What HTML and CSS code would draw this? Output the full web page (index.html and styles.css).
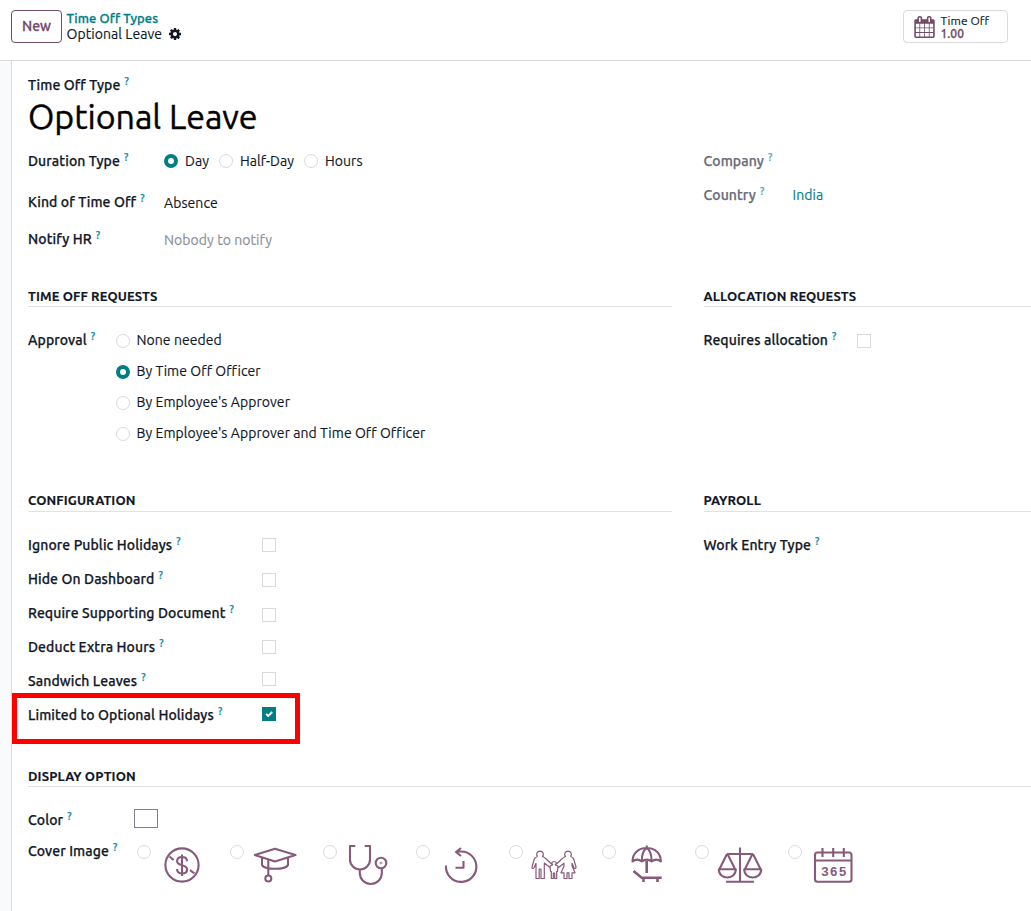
FILE: index.html
```html
<!DOCTYPE html>
<html lang="en">
<head>
<meta charset="utf-8">
<title>Optional Leave</title>
<link rel="stylesheet" href="styles.css">
</head>
<body>
<header class="topbar">
  <button class="btn-new">New</button>
  <nav class="crumbs">
    <a class="crumb-link">Time Off Types</a>
    <div class="crumb-current"><span>Optional Leave</span>
      <svg class="gear" viewBox="128 128 1536 1536"><path d="M1152 896q0-106-75-181t-181-75-181 75-75 181 75 181 181 75 181-75 75-181zm512-109v222q0 12-8 23t-20 13l-185 28q-19 54-39 91 35 50 107 138 10 12 10 25t-9 23q-27 37-99 108t-94 71q-12 0-26-9l-138-108q-44 23-91 38-16 136-29 186-7 28-36 28h-222q-14 0-24.5-8.5t-11.5-21.5l-28-184q-49-16-90-37l-141 107q-10 9-25 9-14 0-25-11-126-114-165-168-7-10-7-23 0-12 8-23 15-21 51-66.500t54-70.500q-27-50-41-99l-183-27q-13-2-21-12.500t-8-23.500v-222q0-12 8-23t19-13l186-28q14-46 39-92-40-57-107-138-10-12-10-24 0-10 9-23 26-36 98.500-107.500t94.500-71.500q13 0 26 10l138 107q44-23 91-38 16-136 29-186 7-28 36-28h222q14 0 24.500 8.500t11.500 21.500l28 184q49 16 90 37l142-107q9-9 24-9 13 0 25 10 129 119 165 170 7 8 7 22 0 12-8 23-15 21-51 66.500t-54 70.500q26 50 41 98l183 28q13 2 21 12.500t8 23.500z"/></svg>
    </div>
  </nav>
  <button class="stat">
    <svg class="cal" viewBox="64 0 1664 1792"><path d="M192 1664h288v-288h-288v288zm352 0h320v-288h-320v288zm-352-352h288v-320h-288v320zm352 0h320v-320h-320v320zm-352-384h288v-288h-288v288zm736 736h320v-288h-320v288zm-384-736h320v-288h-320v288zm768 736h288v-288h-288v288zm-384-352h320v-320h-320v320zm-352-864v-288q0-13-9.500-22.500t-22.500-9.500h-64q-13 0-22.500 9.500t-9.500 22.500v288q0 13 9.500 22.500t22.500 9.500h64q13 0 22.500-9.500t9.500-22.500zm736 864h288v-320h-288v320zm-384-384h320v-288h-320v288zm384 0h288v-288h-288v288zm32-480v-288q0-13-9.500-22.500t-22.500-9.500h-64q-13 0-22.500 9.500t-9.500 22.500v288q0 13 9.500 22.500t22.500 9.500h64q13 0 22.500-9.500t9.500-22.500zm384-64v1280q0 52-38 90t-90 38h-1408q-52 0-90-38t-38-90v-1280q0-52 38-90t90-38h128v-96q0-66 47-113t113-47h64q66 0 113 47t47 113v96h384v-96q0-66 47-113t113-47h64q66 0 113 47t47 113v96h128q52 0 90 38t38 90z"/></svg>
    <span class="stat-text"><span class="stat-name">Time Off</span><span class="stat-value">1.00</span></span>
  </button>
</header>
<main class="sheet">
  <div class="label title-label"><span>Time Off Type</span><sup>?</sup></div>
  <h1 class="title">Optional Leave</h1>

  <div class="columns general">
    <div class="col">
      <div class="row row-duration"><div class="label w136"><span>Duration Type</span><sup>?</sup></div>
        <div class="inline-radios">
          <label class="opt day"><i class="radio on"></i><span>Day</span></label>
          <label class="opt half"><i class="radio"></i><span>Half-Day</span></label>
          <label class="opt hours"><i class="radio"></i><span>Hours</span></label>
        </div>
      </div>
      <div class="row row-kind"><div class="label w136"><span>Kind of Time Off</span><sup>?</sup></div><span class="value low">Absence</span></div>
      <div class="row"><div class="label w136"><span>Notify HR</span><sup>?</sup></div><span class="value low placeholder">Nobody to notify</span></div>
    </div>
    <div class="col muted">
      <div class="row h34"><div class="label"><span>Company</span><sup>?</sup></div></div>
      <div class="row"><div class="label w89"><span>Country</span><sup>?</sup></div><a class="value link">India</a></div>
    </div>
  </div>

  <div class="columns requests">
    <section class="col">
      <h2>TIME OFF REQUESTS</h2>
      <div class="row"><div class="label w88"><span>Approval</span><sup>?</sup></div>
        <div class="stack-radios">
          <label class="opt"><i class="radio"></i><span>None needed</span></label>
          <label class="opt"><i class="radio on"></i><span>By Time Off Officer</span></label>
          <label class="opt"><i class="radio"></i><span>By Employee's Approver</span></label>
          <label class="opt"><i class="radio"></i><span>By Employee's Approver and Time Off Officer</span></label>
        </div>
      </div>
    </section>
    <section class="col">
      <h2>ALLOCATION REQUESTS</h2>
      <div class="row"><div class="label w153"><span>Requires allocation</span><sup>?</sup></div><i class="check c4"></i></div>
    </section>
  </div>

  <div class="columns config">
    <section class="col">
      <h2>CONFIGURATION</h2>
      <div class="row h34"><div class="label w234"><span>Ignore Public Holidays</span><sup>?</sup></div><i class="check c3"></i></div>
      <div class="row h34"><div class="label w234"><span>Hide On Dashboard</span><sup>?</sup></div><i class="check c4"></i></div>
      <div class="row h34"><div class="label w234"><span>Require Supporting Document</span><sup>?</sup></div><i class="check c5"></i></div>
      <div class="row h34"><div class="label w234"><span>Deduct Extra Hours</span><sup>?</sup></div><i class="check c3"></i></div>
      <div class="row h34"><div class="label w234"><span>Sandwich Leaves</span><sup>?</sup></div><i class="check c1"></i></div>
      <div class="row limited"><div class="label w234"><span>Limited to Optional Holidays</span><sup>?</sup></div><i class="check c2 checked"><svg viewBox="0 0 14 14"><path d="M4 6.800 6.200 9 10.200 5"/></svg></i><div class="highlight"></div></div>
    </section>
    <section class="col">
      <h2>PAYROLL</h2>
      <div class="row"><div class="label"><span>Work Entry Type</span><sup>?</sup></div></div>
    </section>
  </div>

  <section class="display">
    <h2>DISPLAY OPTION</h2>
    <div class="row color-row"><div class="label w106"><span>Color</span><sup>?</sup></div><i class="swatch"></i></div>
    <div class="row"><div class="label w109"><span>Cover Image</span><sup>?</sup></div>
      <div class="covers">
        <label class="cover"><i class="radio"></i><svg viewBox="159 842 48 46"><circle cx="182" cy="865" r="16.600"/><path d="M169.500 856.500l4.200 3.500M190 870.200l4.500 3.300M182 854.500v21.500M187 861.300c0-2.700-2-4.300-5-4.300s-4.900 1.600-4.900 4.200c0 5.300 10 2.600 10 8 0 2.700-2.100 4.300-5.100 4.300s-5-1.700-5-4.400"/></svg></label>
        <label class="cover"><i class="radio"></i><svg viewBox="252 842 48 46"><path d="M254.800 855 275 848.700l20.500 6.300L275 861.400zM262 857.500v7.500c2 5 24 5 26 0v-7.500M268.300 859.500v16"/><circle cx="268.300" cy="878.500" r="3"/></svg></label>
        <label class="cover"><i class="radio"></i><svg viewBox="345 842 48 46"><path d="M355.300 846h-5.300v13.500a10 10 0 0 0 20 0v-13.500h-5.300M359.800 869.700v3.300a11 11 0 0 0 22 0v-4.500"/><circle cx="381" cy="863" r="5.300"/><circle cx="381" cy="863" r=".3"/></svg></label>
        <label class="cover"><i class="radio"></i><svg viewBox="438 842 48 46"><path d="M446 865.500a15.200 15.200 0 1 0 15.200-14h-4.500M461 848l-5 4 5 4M463.500 861v6.700h-8"/></svg></label>
        <label class="cover"><i class="radio"></i><svg class="thin" viewBox="531 842 48 46"><path d="M537.500 856.500c-1.800-2-.5-5.300 2.500-5.300s4.300 3.300 2.500 5.300c1.500.8 2.500 1.200 3.700 2.500l4.800 4.500 2.200 1M537.500 856.500c-1.500.5-2.700 1-3.200 2.500l-2.300 8c-.3 1.500 1.300 2 2 .8l2-4.500v15.200h3.200v-9.500h1.800v9.500h3.300v-15.500l5.700 4.500"/><path d="M570.500 856.500c1.800-2 .5-5.300-2.500-5.300s-4.300 3.300-2.500 5.300c-1.500.8-2.500 1.200-3.700 2.500l-4.800 4.500-2.200 1M570.500 856.500c1.500.5 2.700 1 3.200 2.500l2.300 8c.3 1.500-1.300 2-2 .8l-2-4.500v2.500l3 7h-3v5.700h-3v-5.700h-2v5.700h-3v-5.700h-3l3-6.500v-3l-5.700 4.500M552.300 865.200c-1.200-1.500-.5-3.700 1.700-3.700s2.900 2.200 1.700 3.700l2.300.8-.5 5.500h-.8v7h-2v-5.500h-1.400v5.500h-2v-7h-.8l-.5-5.500z"/></svg></label>
        <label class="cover"><i class="radio"></i><svg viewBox="624 842 48 46"><path d="M646.700 845.500v2.500M632.500 861.500c0-8 5.700-13.500 14.200-13.500s14.200 5.500 14.200 13.500c-3-2.300-6.500-2.300-9.300 0-3-2.300-6.800-2.300-9.800 0-2.800-2.300-6.300-2.300-9.300 0zM641.800 861c0-6 2-11 4.900-13 2.900 2 4.900 7 4.900 13"/><path class="thick" d="M646.700 861v12M633.500 871l8.200 6.700h20M643.500 878v4M657.500 878v4"/></svg></label>
        <label class="cover"><i class="radio"></i><svg viewBox="717 842 48 46"><path d="M740 847.500v34M726 881.700h28M727 854h26M727 854l-7.500 15M727.500 854l7.500 15M752.500 854l-7.500 15M753 854l7.500 15M718.800 869.300h17c0 11-17 11-17 0zM744.200 869.300h17c0 11-17 11-17 0z"/></svg></label>
        <label class="cover"><i class="radio"></i><svg viewBox="810 842 48 46"><rect x="815" y="852.500" width="36.500" height="29.300" rx="2.500"/><path d="M815 860.500h36.500M822.500 848v9M833.200 848v9M843.800 848v9"/><text x="821" y="875.500" textLength="25.500" lengthAdjust="spacing">365</text></svg></label>
      </div>
    </div>
  </section>
</main>
</body>
</html>
```
FILE: styles.css
```css
* { box-sizing: border-box; }
body {
  margin: 0;
  height: 911px;
  overflow: hidden;
  display: flex;
  flex-direction: column;
  background: #f9fafb;
  color: #111827;
  font: 14px/20px Ubuntu, "Noto Sans", sans-serif;
  letter-spacing: .06px;
  -webkit-text-stroke: .15px;
}
button { font: inherit; letter-spacing: inherit; background: #fff; cursor: pointer; }
h1, h2 { margin: 0; }
span, a { white-space: nowrap; }

.topbar {
  flex: none;
  display: flex;
  align-items: flex-start;
  height: 61px;
  padding: 10px 23px 0 11px;
  background: #fff;
  border-bottom: 1px solid #d8dadd;
}
.btn-new {
  width: 51px;
  height: 33px;
  padding: 0 0 2px;
  border: 1px solid #714b67;
  border-radius: 4px;
  color: #714b67;
  font-weight: 500;
  -webkit-text-stroke: .3px;
}
.crumbs { flex: 1; padding-left: 4.500px; line-height: 16px; }
.crumb-link { display: block; color: #017e84; font-size: 13px; font-weight: 500; letter-spacing: .08px; -webkit-text-stroke: .3px; }
.crumb-current { display: flex; align-items: center; gap: 7px; }
.gear { width: 12px; height: 12px; fill: #111827; }
.stat {
  display: flex;
  align-items: center;
  width: 105px;
  height: 33px;
  padding: 0 0 0 10px;
  border: 1px solid #d8dadd;
  border-radius: 4px;
  text-align: left;
  color: #111827;
}
.cal { width: 21px; height: 22px; margin-right: 5.500px; fill: #714b67; }
.stat-text { display: flex; flex-direction: column; font-size: 12px; line-height: 13px; }
.stat-value { color: #714b67; font-weight: 500; -webkit-text-stroke: .3px; }

.sheet {
  flex: 1;
  margin-left: 11px;
  padding: 14px 0 0 16px;
  border-left: 1px solid #d8dadd;
  background: #fff;
}
.label { display: flex; font-weight: 500; letter-spacing: .1px; -webkit-text-stroke: .25px; }
.label sup {
  margin: -4px 0 0 4px;
  font-size: 10.500px;
  line-height: 20px;
  color: #0b8cb0;
  -webkit-text-stroke: .25px;
}
.title { height: 56px; font-size: 34px; line-height: 42px; font-weight: 400; letter-spacing: -.05px; color: #000; -webkit-text-stroke: .4px; }
.columns { display: grid; grid-template-columns: 644px 1fr; column-gap: 31.500px; }
.row { display: flex; align-items: flex-start; }
.general { height: 135px; }
.row-duration { height: 41px; }
.row-kind { height: 37px; }
.h34 { height: 34px; }
.w136 { width: 136px; }
.w89 { width: 89px; }
.w88 { width: 88px; }
.w153 { width: 153px; }
.w234 { width: 234px; }
.w106 { width: 106px; }
.w109 { width: 109px; }
.low { padding-top: 1px; }
.placeholder { color: #8a8f99; }
.link { color: #017e84; }
.muted .label { color: #666b76; }
.muted sup { opacity: .75; }

.radio {
  flex: none;
  width: 14px;
  height: 14px;
  border: 1px solid #d8dadd;
  border-radius: 50%;
  background: #fff;
}
.radio.on { border: 4px solid #017e84; }
.opt { display: flex; }
.opt .radio { margin: 3px 6.500px 0 0; }
.inline-radios .opt .radio { margin-right: 7px; }
.inline-radios { display: flex; }
.day { width: 55px; }
.half { width: 85px; }
.stack-radios .opt { height: 31px; }
.stack-radios .opt .radio { margin-top: 4px; }

h2 {
  height: 21px;
  margin-bottom: 23px;
  border-bottom: 1px solid #e0e2e5;
  font-size: 13px;
  line-height: 20px;
  font-weight: 700;
  letter-spacing: .12px;
}
.requests { height: 204px; }
.config h2 { height: 22px; }
.config { height: 276px; }

.check { width: 14px; height: 14px; border: 1px solid #d8dadd; background: #fff; }
.c1 { margin-top: 1px; }
.c2 { margin-top: 2px; }
.c3 { margin-top: 3px; }
.c4 { margin-top: 4px; }
.c5 { margin-top: 5px; }
.checked { border: 0; background: #017e84; }
.checked svg { display: block; width: 14px; height: 14px; fill: none; stroke: #fff; stroke-width: 1.900; }
.limited { position: relative; }
.highlight {
  position: absolute;
  left: -16px;
  top: -12px;
  width: 288px;
  height: 51px;
  border: 5px solid #fe0000;
}

.color-row { height: 31px; }
.swatch { width: 24px; height: 19px; margin-top: -1px; border: 1px solid #7d828c; }
.covers { display: flex; padding-top: 4px; }
.cover { display: flex; width: 93px; align-items: flex-start; }
.cover svg {
  width: 48px;
  height: 46px;
  margin: -3px 0 0 8px;
  fill: none;
  stroke: #875a7b;
  stroke-width: 2.100;
  stroke-linejoin: round;
}
.cover svg.thin { stroke-width: 1.200; }
.cover .thick { stroke-width: 2.600; }
.cover text { font: 700 13px "Liberation Mono", monospace; letter-spacing: 0; fill: #875a7b; stroke: none; -webkit-text-stroke: 0; }
```
